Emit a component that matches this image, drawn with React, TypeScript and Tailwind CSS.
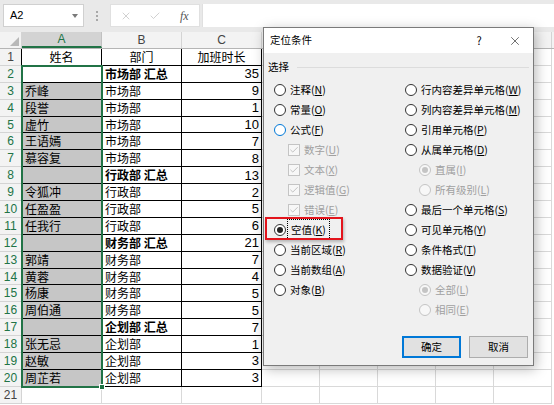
import { Check, X } from "lucide-react";

type Row = { a: string; b: string; c: string | number; bold?: boolean };

const rows: Row[] = [
  { a: "姓名", b: "部门", c: "加班时长" },
  { a: "", b: "市场部 汇总", c: 35, bold: true },
  { a: "乔峰", b: "市场部", c: 9 },
  { a: "段誉", b: "市场部", c: 1 },
  { a: "虚竹", b: "市场部", c: 10 },
  { a: "王语嫣", b: "市场部", c: 7 },
  { a: "慕容复", b: "市场部", c: 8 },
  { a: "", b: "行政部 汇总", c: 13, bold: true },
  { a: "令狐冲", b: "行政部", c: 2 },
  { a: "任盈盈", b: "行政部", c: 5 },
  { a: "任我行", b: "行政部", c: 6 },
  { a: "", b: "财务部 汇总", c: 21, bold: true },
  { a: "郭靖", b: "财务部", c: 7 },
  { a: "黄蓉", b: "财务部", c: 4 },
  { a: "杨康", b: "财务部", c: 5 },
  { a: "周伯通", b: "财务部", c: 5 },
  { a: "", b: "企划部 汇总", c: 7, bold: true },
  { a: "张无忌", b: "企划部", c: 1 },
  { a: "赵敏", b: "企划部", c: 3 },
  { a: "周芷若", b: "企划部", c: 3 },
];

// columns D..H sit behind the dialog, only their grid lines show
const emptyCols = ["D", "E", "F", "G", "H"];

interface Option {
  kind: "radio" | "check";
  label: string;
  k: string;
  checked?: boolean;
  disabled?: boolean;
  sub?: boolean;
  hover?: boolean;
  focus?: boolean;
}

const leftOptions: Option[] = [
  { kind: "radio", label: "注释", k: "N" },
  { kind: "radio", label: "常量", k: "O" },
  { kind: "radio", label: "公式", k: "F", hover: true },
  { kind: "check", label: "数字", k: "U", checked: true, disabled: true, sub: true },
  { kind: "check", label: "文本", k: "X", checked: true, disabled: true, sub: true },
  { kind: "check", label: "逻辑值", k: "G", checked: true, disabled: true, sub: true },
  { kind: "check", label: "错误", k: "E", checked: true, disabled: true, sub: true },
  { kind: "radio", label: "空值", k: "K", checked: true, focus: true },
  { kind: "radio", label: "当前区域", k: "R" },
  { kind: "radio", label: "当前数组", k: "A" },
  { kind: "radio", label: "对象", k: "B" },
];

const rightOptions: Option[] = [
  { kind: "radio", label: "行内容差异单元格", k: "W" },
  { kind: "radio", label: "列内容差异单元格", k: "M" },
  { kind: "radio", label: "引用单元格", k: "P" },
  { kind: "radio", label: "从属单元格", k: "D" },
  { kind: "radio", label: "直属", k: "I", checked: true, disabled: true, sub: true },
  { kind: "radio", label: "所有级别", k: "L", disabled: true, sub: true },
  { kind: "radio", label: "最后一个单元格", k: "S" },
  { kind: "radio", label: "可见单元格", k: "Y" },
  { kind: "radio", label: "条件格式", k: "T" },
  { kind: "radio", label: "数据验证", k: "V" },
  { kind: "radio", label: "全部", k: "L", checked: true, disabled: true, sub: true },
  { kind: "radio", label: "相同", k: "E", disabled: true, sub: true },
];

const Toolbar = () => (
  <div className="h-[32px] bg-[#e9e9e9] flex items-start pt-[4px]">
    <div className="ml-[3px] w-[81px] h-[23px] bg-white border border-[#d0d0d0] flex items-center pl-[6px] pr-[5px] font-['Liberation_Sans',sans-serif] text-[11px] leading-none text-black">
      <span className="flex-1">A2</span>
      <span className="w-0 h-0 border-l-[3px] border-r-[3px] border-t-[4px] border-l-transparent border-r-transparent border-t-[#7a7a7a]" />
    </div>
    <div className="w-[26px] h-[23px] flex flex-col items-center justify-center gap-[2px]">
      <span className="w-[2px] h-[2px] bg-[#a8a8a8]" />
      <span className="w-[2px] h-[2px] bg-[#a8a8a8]" />
      <span className="w-[2px] h-[2px] bg-[#a8a8a8]" />
    </div>
    <div className="w-[90px] h-[23px] bg-white border border-[#e0e0e0] flex items-center">
      <span className="w-[30px] flex justify-center">
        <X size={12} strokeWidth={1.4} color="#bdbdbd" />
      </span>
      <span className="w-[30px] flex justify-center">
        <Check size={12} strokeWidth={1.4} color="#bdbdbd" />
      </span>
      <span className="w-[30px] flex justify-center font-['Liberation_Serif',serif] italic text-[12px] leading-none text-[#555]">
        fx
      </span>
    </div>
    <div className="ml-[2px] flex-1 h-[23px] bg-white border-l border-[#e0e0e0]" />
  </div>
);

const HeaderRow = () => (
  <div className="flex h-[17px] bg-[#f3f3f3] border-b border-[#b5b5b5] font-['Liberation_Sans',sans-serif] text-[12px] leading-none text-[#444]">
    <div className="w-[22px] shrink-0 border-r border-[#d4d4d4] relative">
      <div className="absolute right-[2px] bottom-[2px] w-0 h-0 border-l-[9px] border-l-transparent border-b-[9px] border-b-[#b8b8b8]" />
    </div>
    <div className="w-[80px] shrink-0 bg-[#d3d3d3] border-r border-[#c0c0c0] border-b-2 border-b-[#217346] text-[#217346] flex items-center justify-center">
      A
    </div>
    <div className="w-[80px] shrink-0 border-r border-[#d4d4d4] flex items-center justify-center">B</div>
    <div className="w-[80px] shrink-0 border-r border-[#d4d4d4] flex items-center justify-center">C</div>
    {emptyCols.map((c) => (
      <div key={c} className="w-[58px] shrink-0 border-r border-[#d4d4d4]" />
    ))}
  </div>
);

const Sheet = () => (
  <div className="relative leading-none">
    {rows.map((r, i) => {
      const n = i + 1;
      return (
        <div key={n} className="flex h-[16.9px] text-[12px] text-black">
          <div
            className={`w-[22px] shrink-0 bg-[#f3f3f3] border-r border-r-black border-b border-b-[#d4d4d4] flex items-center justify-center font-['Liberation_Sans',sans-serif] text-[12px] ${
              n >= 2 ? "text-[#217346]" : "text-[#444]"
            }`}
          >
            {n}
          </div>
          <div
            className={`w-[80px] shrink-0 border-r border-b border-black flex items-center px-[3px] ${
              n === 1 ? "justify-center bg-white" : n === 2 ? "bg-white" : "bg-[#c6c6c6]"
            }`}
          >
            {r.a}
          </div>
          <div
            className={`w-[80px] shrink-0 border-r border-b border-black flex items-center px-[3px] ${
              n === 1 ? "justify-center" : ""
            } ${r.bold ? "font-bold" : ""}`}
          >
            {r.b}
          </div>
          <div
            className={`w-[80px] shrink-0 border-r border-b border-black flex items-center px-[2px] ${
              n === 1 ? "justify-center" : "justify-end font-['Liberation_Sans',sans-serif] text-[13px]"
            }`}
          >
            {r.c}
          </div>
          {emptyCols.map((c) => (
            <div key={c} className="w-[58px] shrink-0 border-r border-b border-[#d9d9d9]" />
          ))}
        </div>
      );
    })}
    <div className="flex h-[16.9px]">
      <div className="w-[22px] shrink-0 bg-[#f3f3f3] border-r border-b border-[#d4d4d4] flex items-center justify-center font-['Liberation_Sans',sans-serif] text-[12px] text-[#444]">
        21
      </div>
      {[0, 1, 2].map((c) => (
        <div key={c} className="w-[80px] shrink-0 border-r border-b border-[#d9d9d9]" />
      ))}
      {emptyCols.map((c) => (
        <div key={c} className="w-[58px] shrink-0 border-r border-b border-[#d9d9d9]" />
      ))}
    </div>
    {/* selection A2:A20 */}
    <div className="absolute left-[21px] top-[15.9px] w-[82px] h-[323.1px] border-2 border-[#217346] pointer-events-none">
      <div className="absolute -right-[4px] -bottom-[4px] w-[6px] h-[6px] bg-[#217346] border border-white" />
    </div>
  </div>
);

const Label = ({ o }: { o: Option }) => (
  <span
    className={`leading-none ${o.disabled ? "text-[#a0a0a0]" : "text-black"} ${
      o.focus ? "outline outline-1 outline-dotted outline-black outline-offset-[2px] px-[1px]" : ""
    }`}
  >
    {o.label}(<span className="underline underline-offset-[1px]">{o.k}</span>)
  </span>
);

const OptionItem = ({ o }: { o: Option }) => (
  <div className={`h-[20px] flex items-center ${o.sub ? "pl-[14px]" : ""}`}>
    {o.kind === "radio" ? (
      <span
        className={`w-[12px] h-[12px] rounded-full border shrink-0 flex items-center justify-center ${
          o.disabled
            ? "border-[#c4c4c4] bg-[#f7f7f7]"
            : o.hover
            ? "border-[#0078d7] bg-white"
            : "border-[#333] bg-white"
        }`}
      >
        {o.checked && (
          <span className={`w-[6px] h-[6px] rounded-full ${o.disabled ? "bg-[#c4c4c4]" : "bg-[#222]"}`} />
        )}
      </span>
    ) : (
      <span className="w-[12px] h-[12px] border border-[#c4c4c4] bg-[#f7f7f7] shrink-0 flex items-center justify-center">
        {o.checked && <Check size={10} strokeWidth={1.8} color="#b0b0b0" />}
      </span>
    )}
    <span className="ml-[4px] leading-none">
      <Label o={o} />
    </span>
  </div>
);

const Dialog = () => (
  <div className="absolute left-[263px] top-[27px] w-[271px] h-[339px] border border-[#7a7a7a] bg-[#f0f0f0] shadow-[2px_3px_12px_rgba(0,0,0,0.28)] text-[10.5px] leading-none text-black">
    <div className="h-[25px] bg-white flex items-center pl-[6px] pr-[8px]">
      <span className="flex-1">定位条件</span>
      <span className="w-[20px] text-center text-[11px]">?</span>
      <span className="ml-[16px] w-[20px] flex justify-center">
        <X size={14} strokeWidth={1.1} color="#222" />
      </span>
    </div>
    <div className="px-[4px] pt-[7px] flex items-center h-[21px]">
      <span>选择</span>
      <span className="ml-[8px] flex-1 h-px bg-[#dcdcdc]" />
    </div>
    <div className="mt-[6px] flex pl-[10px]">
      <div className="w-[131px] flex flex-col">
        {leftOptions.map((o, i) => (
          <OptionItem key={i} o={o} />
        ))}
      </div>
      <div className="flex-1 flex flex-col">
        {rightOptions.map((o, i) => (
          <OptionItem key={i} o={o} />
        ))}
      </div>
    </div>
    <div className="mt-[16px] flex justify-end gap-[8px] pr-[5px]">
      <button className="w-[59px] h-[22px] border-2 border-[#0078d7] bg-[#e1e1e1] flex items-center justify-center">
        确定
      </button>
      <button className="w-[59px] h-[22px] border border-[#adadad] bg-[#e1e1e1] flex items-center justify-center">
        取消
      </button>
    </div>
    {/* red highlight around 空值 */}
    <div className="absolute left-[1px] top-[189px] w-[78px] h-[23px] border-2 border-[#e3141c] shadow-[1px_2px_3px_rgba(0,0,0,0.25)] pointer-events-none" />
  </div>
);

export default function App() {
  return (
    <div className="relative w-[554px] h-[405px] overflow-hidden bg-white font-['Noto_Sans_CJK_SC','Noto_Sans',sans-serif]">
      <Toolbar />
      <HeaderRow />
      <Sheet />
      <Dialog />
    </div>
  );
}
